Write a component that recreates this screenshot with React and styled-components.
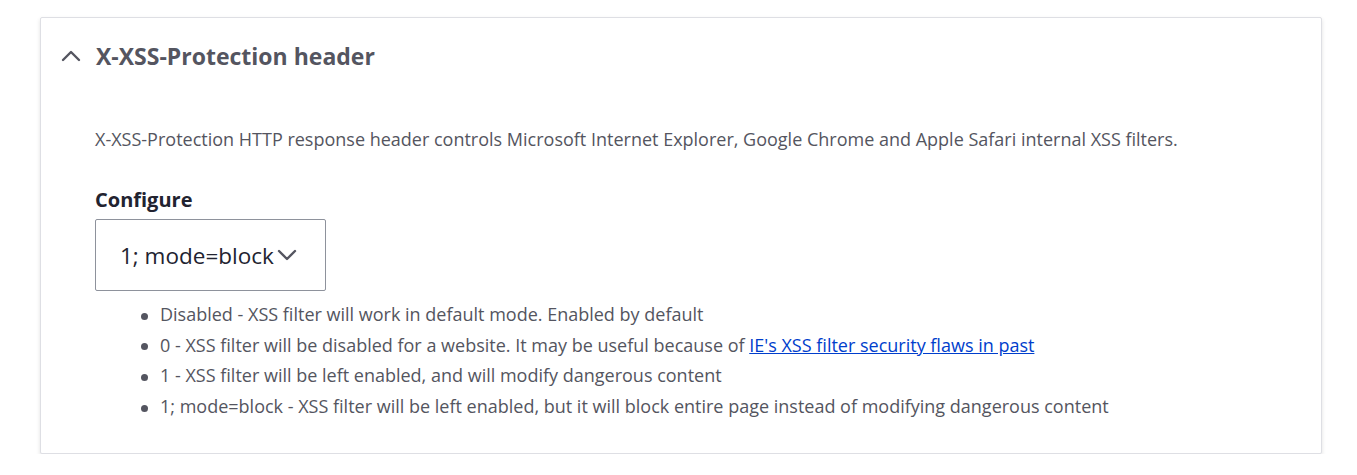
import React from "react";
import styled, { createGlobalStyle } from "styled-components";

const GlobalStyle = createGlobalStyle`
  html, body {
    margin: 0;
    padding: 0;
    background: #ffffff;
  }
  body {
    font-family: "Open Sans", "Noto Sans", sans-serif;
    color: #222330;
  }
`;

const Page = styled.div`
  padding: 17px 35px 0 40px;
`;

const Card = styled.details`
  border: 1px solid #dedfe4;
  border-radius: 2px;
  box-shadow: 0 2px 4px rgba(0, 0, 0, 0.12);
  background: #ffffff;
  padding-bottom: 31px;
`;

const Summary = styled.summary`
  display: flex;
  align-items: center;
  gap: 15px;
  list-style: none;
  padding: 23px 20px 0 20px;
  height: 30px;
  cursor: pointer;
  color: #545560;
  font-size: 23px;
  font-weight: 700;
  line-height: 30px;

  &::-webkit-details-marker {
    display: none;
  }
`;

const Body = styled.div`
  padding: 55px 54px 0 54px;
`;

const Description = styled.p`
  margin: 0;
  font-size: 18px;
  line-height: 26px;
  color: #545560;
`;

const Label = styled.label`
  display: block;
  margin-top: 35px;
  font-size: 20px;
  font-weight: 700;
  line-height: 26px;
  color: #222330;
`;

const SelectBox = styled.div`
  display: inline-flex;
  align-items: center;
  gap: 3px;
  box-sizing: border-box;
  width: 231px;
  height: 72px;
  margin-top: 6px;
  padding: 0 22px 0 24px;
  border: 1px solid #8e929c;
  border-radius: 2px;
  font-size: 22.5px;
  color: #222330;
  white-space: nowrap;
`;

const List = styled.ul`
  margin: 8px 0 0 0;
  padding: 0 0 0 65px;
  list-style: none;
  font-size: 18px;
  line-height: 30.7px;
  color: #545560;
`;

const Item = styled.li`
  &::before {
    content: "";
    display: inline-block;
    width: 7px;
    height: 7px;
    margin: 0 12px 0 -19px;
    border-radius: 50%;
    background: #545560;
    vertical-align: middle;
  }
`;

const Link = styled.a`
  color: #003ecc;
  text-decoration: underline;
`;

const Chevron = ({ up }) => (
  <svg width="20" height="14" viewBox="0 0 20 14" aria-hidden="true">
    <path
      d={up ? "M2 11 L10 3 L18 11" : "M2 3 L10 11 L18 3"}
      fill="none"
      stroke="#545560"
      strokeWidth="2.4"
      strokeLinecap="round"
      strokeLinejoin="round"
    />
  </svg>
);

export default function App() {
  return (
    <Page>
      <GlobalStyle />
      <Card open>
        <Summary>
          <Chevron up />
          X-XSS-Protection header
        </Summary>
        <Body>
          <Description>
            X-XSS-Protection HTTP response header controls Microsoft Internet Explorer, Google
            Chrome and Apple Safari internal XSS filters.
          </Description>
          <Label>Configure</Label>
          <SelectBox>
            1; mode=block
            <Chevron />
          </SelectBox>
          <List>
            <Item>Disabled - XSS filter will work in default mode. Enabled by default</Item>
            <Item>
              0 - XSS filter will be disabled for a website. It may be useful because of{" "}
              <Link href="#">IE's XSS filter security flaws in past</Link>
            </Item>
            <Item>1 - XSS filter will be left enabled, and will modify dangerous content</Item>
            <Item>
              1; mode=block - XSS filter will be left enabled, but it will block entire page
              instead of modifying dangerous content
            </Item>
          </List>
        </Body>
      </Card>
    </Page>
  );
}
